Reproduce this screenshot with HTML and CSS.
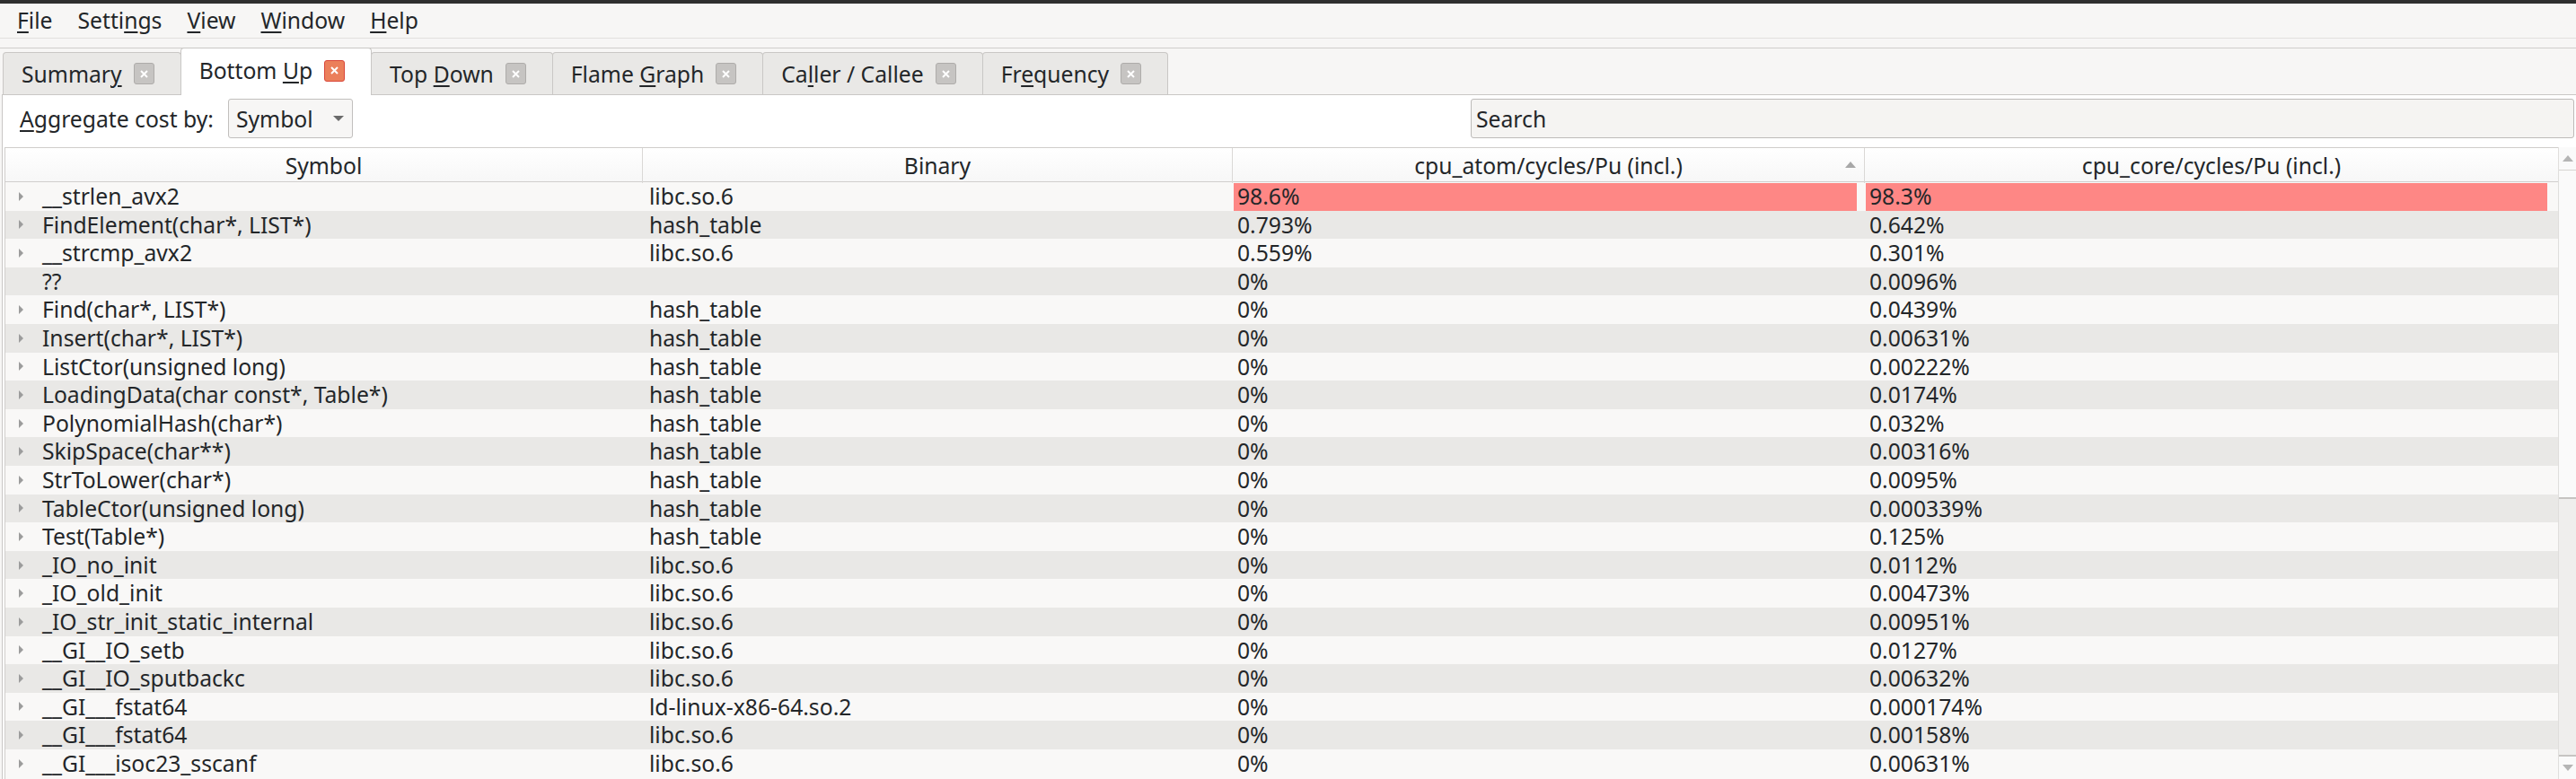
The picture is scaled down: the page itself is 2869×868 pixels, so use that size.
FILE: index.html
```html
<!DOCTYPE html>
<html>
<head>
<meta charset="utf-8">
<link rel="stylesheet" href="styles.css">
</head>
<body>
<div class="app">
  <div class="titlebar"></div>
  <nav class="menubar">
    <span class="menu"><u>F</u>ile</span>
    <span class="menu">Setti<u>n</u>gs</span>
    <span class="menu"><u>V</u>iew</span>
    <span class="menu"><u>W</u>indow</span>
    <span class="menu"><u>H</u>elp</span>
  </nav>
  <div class="tabstrip">
    <div class="tab"><span class="tab-label">Summar<u>y</u></span><span class="close"><svg width="11" height="11" viewBox="0 0 11 11"><path d="M2 2L9 9M9 2L2 9" stroke="#fff" stroke-width="2" fill="none"/></svg></span></div>
    <div class="tab active"><span class="tab-label">Bottom <u>U</u>p</span><span class="close"><svg width="11" height="11" viewBox="0 0 11 11"><path d="M2 2L9 9M9 2L2 9" stroke="#fff" stroke-width="2" fill="none"/></svg></span></div>
    <div class="tab"><span class="tab-label">Top <u>D</u>own</span><span class="close"><svg width="11" height="11" viewBox="0 0 11 11"><path d="M2 2L9 9M9 2L2 9" stroke="#fff" stroke-width="2" fill="none"/></svg></span></div>
    <div class="tab"><span class="tab-label">Flame <u>G</u>raph</span><span class="close"><svg width="11" height="11" viewBox="0 0 11 11"><path d="M2 2L9 9M9 2L2 9" stroke="#fff" stroke-width="2" fill="none"/></svg></span></div>
    <div class="tab"><span class="tab-label">Ca<u>l</u>ler / Callee</span><span class="close"><svg width="11" height="11" viewBox="0 0 11 11"><path d="M2 2L9 9M9 2L2 9" stroke="#fff" stroke-width="2" fill="none"/></svg></span></div>
    <div class="tab"><span class="tab-label">Fr<u>e</u>quency</span><span class="close"><svg width="11" height="11" viewBox="0 0 11 11"><path d="M2 2L9 9M9 2L2 9" stroke="#fff" stroke-width="2" fill="none"/></svg></span></div>
  </div>
  <div class="pane">
    <div class="toolbar">
      <span class="label"><u>A</u>ggregate cost by:</span>
      <div class="combo"><span>Symbol</span><span class="arrow"></span></div>
      <div class="search">Search</div>
    </div>
    <div class="view">
      <div class="table">
        <div class="thead">
          <div class="th">Symbol</div>
          <div class="th">Binary</div>
          <div class="th sorted">cpu_atom/cycles/Pu (incl.)<span class="sort"></span></div>
          <div class="th">cpu_core/cycles/Pu (incl.)</div>
        </div>
        <div class="row"><div class="td sym"><span class="exp"></span>__strlen_avx2</div><div class="td bin">libc.so.6</div><div class="td num"><span class="bar" style="width:98.6%"></span><span class="val">98.6%</span></div><div class="td num"><span class="bar" style="width:98.3%"></span><span class="val">98.3%</span></div></div>
        <div class="row"><div class="td sym"><span class="exp"></span>FindElement(char*, LIST*)</div><div class="td bin">hash_table</div><div class="td num"><span class="val">0.793%</span></div><div class="td num"><span class="val">0.642%</span></div></div>
        <div class="row"><div class="td sym"><span class="exp"></span>__strcmp_avx2</div><div class="td bin">libc.so.6</div><div class="td num"><span class="val">0.559%</span></div><div class="td num"><span class="val">0.301%</span></div></div>
        <div class="row"><div class="td sym"><span class="exp none"></span>??</div><div class="td bin"></div><div class="td num"><span class="val">0%</span></div><div class="td num"><span class="val">0.0096%</span></div></div>
        <div class="row"><div class="td sym"><span class="exp"></span>Find(char*, LIST*)</div><div class="td bin">hash_table</div><div class="td num"><span class="val">0%</span></div><div class="td num"><span class="val">0.0439%</span></div></div>
        <div class="row"><div class="td sym"><span class="exp"></span>Insert(char*, LIST*)</div><div class="td bin">hash_table</div><div class="td num"><span class="val">0%</span></div><div class="td num"><span class="val">0.00631%</span></div></div>
        <div class="row"><div class="td sym"><span class="exp"></span>ListCtor(unsigned long)</div><div class="td bin">hash_table</div><div class="td num"><span class="val">0%</span></div><div class="td num"><span class="val">0.00222%</span></div></div>
        <div class="row"><div class="td sym"><span class="exp"></span>LoadingData(char const*, Table*)</div><div class="td bin">hash_table</div><div class="td num"><span class="val">0%</span></div><div class="td num"><span class="val">0.0174%</span></div></div>
        <div class="row"><div class="td sym"><span class="exp"></span>PolynomialHash(char*)</div><div class="td bin">hash_table</div><div class="td num"><span class="val">0%</span></div><div class="td num"><span class="val">0.032%</span></div></div>
        <div class="row"><div class="td sym"><span class="exp"></span>SkipSpace(char**)</div><div class="td bin">hash_table</div><div class="td num"><span class="val">0%</span></div><div class="td num"><span class="val">0.00316%</span></div></div>
        <div class="row"><div class="td sym"><span class="exp"></span>StrToLower(char*)</div><div class="td bin">hash_table</div><div class="td num"><span class="val">0%</span></div><div class="td num"><span class="val">0.0095%</span></div></div>
        <div class="row"><div class="td sym"><span class="exp"></span>TableCtor(unsigned long)</div><div class="td bin">hash_table</div><div class="td num"><span class="val">0%</span></div><div class="td num"><span class="val">0.000339%</span></div></div>
        <div class="row"><div class="td sym"><span class="exp"></span>Test(Table*)</div><div class="td bin">hash_table</div><div class="td num"><span class="val">0%</span></div><div class="td num"><span class="val">0.125%</span></div></div>
        <div class="row"><div class="td sym"><span class="exp"></span>_IO_no_init</div><div class="td bin">libc.so.6</div><div class="td num"><span class="val">0%</span></div><div class="td num"><span class="val">0.0112%</span></div></div>
        <div class="row"><div class="td sym"><span class="exp"></span>_IO_old_init</div><div class="td bin">libc.so.6</div><div class="td num"><span class="val">0%</span></div><div class="td num"><span class="val">0.00473%</span></div></div>
        <div class="row"><div class="td sym"><span class="exp"></span>_IO_str_init_static_internal</div><div class="td bin">libc.so.6</div><div class="td num"><span class="val">0%</span></div><div class="td num"><span class="val">0.00951%</span></div></div>
        <div class="row"><div class="td sym"><span class="exp"></span>__GI__IO_setb</div><div class="td bin">libc.so.6</div><div class="td num"><span class="val">0%</span></div><div class="td num"><span class="val">0.0127%</span></div></div>
        <div class="row"><div class="td sym"><span class="exp"></span>__GI__IO_sputbackc</div><div class="td bin">libc.so.6</div><div class="td num"><span class="val">0%</span></div><div class="td num"><span class="val">0.00632%</span></div></div>
        <div class="row"><div class="td sym"><span class="exp"></span>__GI___fstat64</div><div class="td bin">ld-linux-x86-64.so.2</div><div class="td num"><span class="val">0%</span></div><div class="td num"><span class="val">0.000174%</span></div></div>
        <div class="row"><div class="td sym"><span class="exp"></span>__GI___fstat64</div><div class="td bin">libc.so.6</div><div class="td num"><span class="val">0%</span></div><div class="td num"><span class="val">0.00158%</span></div></div>
        <div class="row"><div class="td sym"><span class="exp"></span>__GI___isoc23_sscanf</div><div class="td bin">libc.so.6</div><div class="td num"><span class="val">0%</span></div><div class="td num"><span class="val">0.00631%</span></div></div>
      </div>
      <div class="scrollbar">
        <div class="sb-btn up"><span class="tri-up"></span></div>
        <div class="sb-handle"></div>
        <div class="sb-track"></div>
        <div class="sb-btn down"><span class="tri-down"></span></div>
      </div>
    </div>
  </div>
</div>
</body>
</html>
```
FILE: styles.css
```css
html, body {
  margin: 0;
  padding: 0;
  height: 868px;
  overflow: hidden;
  background: #f7f6f5;
}
.app {
  font-family: "Noto Sans", "Open Sans", sans-serif;
  font-size: 24.7px;
  color: #232629;
  display: flex;
  flex-direction: column;
  height: 868px;
}
u {
  text-decoration-thickness: 2px;
  text-underline-offset: 3px;
}
.titlebar {
  height: 4px;
  background: #2f2f2f;
  flex: none;
}
.menubar {
  height: 38px;
  border-bottom: 1px solid #e2e0de;
  display: flex;
  align-items: center;
  padding-left: 5px;
  flex: none;
}
.menu {
  padding: 0 14px;
  line-height: 38px;
}
.tabstrip {
  margin-top: 10px;
  border-top: 1px solid #cfcdcb;
  height: 51px;
  display: flex;
  align-items: flex-end;
  padding-left: 3px;
  flex: none;
  position: relative;
  z-index: 1;
}
.tab {
  height: 47px;
  box-sizing: border-box;
  display: flex;
  align-items: center;
  gap: 13px;
  padding: 0 29px 0 20px;
  background: #e9e8e6;
  border: 1px solid #c9c7c5;
  border-bottom: none;
  border-radius: 4px 4px 0 0;
  margin-right: -1px;
  white-space: nowrap;
}
.tab.active {
  height: 53px;
  margin-bottom: -1px;
  background: #ffffff;
  padding-bottom: 3px;
}
.close {
  width: 23px;
  height: 24px;
  box-sizing: border-box;
  border: 1px solid #aeacaa;
  border-radius: 3px;
  background: #c6c4c2;
  display: flex;
  align-items: center;
  justify-content: center;
}
.tab.active .close {
  background: #eb7f5b;
  border-color: #d9473a;
}
.pane {
  flex: 1;
  margin-left: 2px;
  background: #ffffff;
  border-top: 1px solid #c9c7c5;
  border-left: 1px solid #c9c7c5;
  display: flex;
  flex-direction: column;
  min-height: 0;
}
.toolbar {
  display: flex;
  align-items: center;
  height: 44px;
  margin-top: 4px;
  padding-left: 19px;
  flex: none;
}
.label {
  margin-right: 16px;
}
.combo {
  width: 139px;
  height: 44px;
  box-sizing: border-box;
  border: 1px solid #c1bfbd;
  border-radius: 3px;
  background: #f7f6f5;
  display: flex;
  align-items: center;
  justify-content: space-between;
  padding: 0 9px 0 8px;
}
.arrow {
  width: 0;
  height: 0;
  border-left: 6px solid transparent;
  border-right: 6px solid transparent;
  border-top: 6px solid #6a6a6a;
}
.search {
  margin-left: auto;
  width: 1229px;
  height: 44px;
  box-sizing: border-box;
  border: 1px solid #bdbbb9;
  border-radius: 3px;
  background: #f5f4f2;
  display: flex;
  align-items: center;
  padding-left: 5px;
  margin-right: 2px;
}
.view {
  margin-top: 10px;
  margin-left: 2px;
  display: flex;
  flex: 1;
  min-height: 0;
}
.table {
  width: 2844px;
  border-top: 1px solid #cfcdcb;
  border-left: 1px solid #cfcdcb;
  box-sizing: border-box;
  background: #f9f8f7;
}
.thead, .row {
  display: grid;
  grid-template-columns: 710px 657px 704px 772px;
}
.thead {
  height: 38px;
  background: linear-gradient(#ffffff, #f7f7f7);
  border-bottom: 1px solid #d1cfcd;
  box-sizing: border-box;
}
.th {
  position: relative;
  text-align: center;
  line-height: 38px;
  padding-top: 1px;
  border-right: 1px solid #dad8d6;
  white-space: nowrap;
}
.th:last-child {
  border-right: none;
}
.sort {
  position: absolute;
  right: 9px;
  top: 15px;
  width: 0;
  height: 0;
  border-left: 6px solid transparent;
  border-right: 6px solid transparent;
  border-bottom: 7px solid #a8a8a8;
}
.row {
  height: 31.6px;
  line-height: 31.6px;
  background: #f9f8f7;
}
.row:nth-child(odd) {
  background: #e9e8e6;
}
.td {
  white-space: nowrap;
  overflow: hidden;
}
.sym {
  display: flex;
  align-items: center;
  padding-left: 15px;
}
.exp {
  width: 0;
  height: 0;
  border-top: 5px solid transparent;
  border-bottom: 5px solid transparent;
  border-left: 5px solid #9c9c9c;
  margin-right: 21px;
}
.exp.none {
  border-left-color: transparent;
}
.bin {
  padding-left: 7px;
}
.num {
  position: relative;
  padding-left: 5px;
}
.bar {
  position: absolute;
  left: 1px;
  top: 1px;
  bottom: 0;
  background: #fe8785;
}
.val {
  position: relative;
}
.scrollbar {
  width: 20px;
  flex: none;
  display: flex;
  flex-direction: column;
  background: #efeeed;
  border-left: 1px solid #e0dedc;
  box-sizing: border-box;
}
.sb-btn {
  height: 25px;
  background: #fafafa;
  display: flex;
  align-items: center;
  justify-content: center;
  flex: none;
}
.sb-btn.up {
  border-bottom: 1px solid #d6d4d2;
}
.sb-btn.down {
  border-top: 2px solid #c6c4c2;
}
.sb-handle {
  height: 364px;
  flex: none;
  background: #fafafa;
  border-bottom: 2px solid #c6c4c2;
}
.sb-track {
  flex: 1;
}
.tri-up {
  width: 0;
  height: 0;
  border-left: 6px solid transparent;
  border-right: 6px solid transparent;
  border-bottom: 7px solid #b5b5b5;
}
.tri-down {
  width: 0;
  height: 0;
  border-left: 6px solid transparent;
  border-right: 6px solid transparent;
  border-top: 7px solid #b5b5b5;
}
```
